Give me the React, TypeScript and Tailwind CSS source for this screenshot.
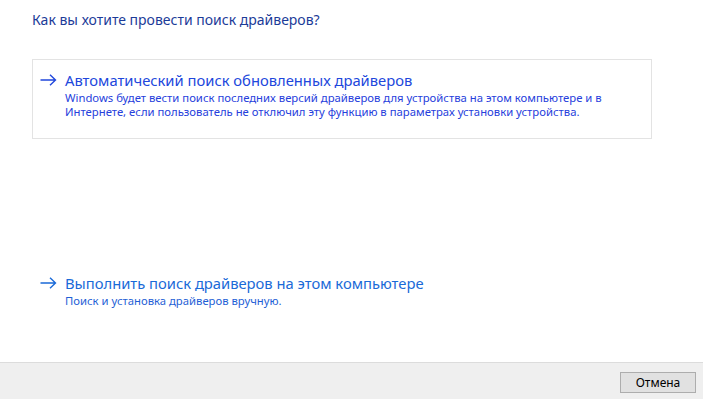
import React from 'react';

const Arrow = () => (
  <svg width="17" height="12" viewBox="0 0 17 12" className="shrink-0">
    <path d="M0.5 6 H15.5 M10 0.8 L15.5 6 L10 11.2" fill="none" stroke="currentColor" strokeWidth="1.4" />
  </svg>
);

const App = () => {
  return (
    <div className="w-[703px] h-[399px] bg-white flex flex-col overflow-hidden" style={{ fontFamily: '"Noto Sans", "Open Sans", sans-serif' }}>
      <div className="flex-1 px-[32px]">
        {/* Main instruction */}
        <h1 className="pt-[10px] text-[14px] leading-[20px] text-[#1c3b98]">Как вы хотите провести поиск драйверов?</h1>

        {/* Option 1 */}
        <div className="mt-[29px] w-[620px] h-[80px] border border-[#e3e3e3] pl-[7px] pt-[10px]">
          <div className="flex items-center gap-[8px] text-[#2147dc]">
            <Arrow />
            <span className="text-[14.75px] leading-[20px]">Автоматический поиск обновленных драйверов</span>
          </div>
          <p className="ml-[25px] mt-[1px] text-[11.3px] leading-[14px] text-[#2640dc]">
            Windows будет вести поиск последних версий драйверов для устройства на этом компьютере и в
            <br />
            Интернете, если пользователь не отключил эту функцию в параметрах установки устройства.
          </p>
        </div>

        {/* Option 2 */}
        <div className="mt-[134px] pl-[8px]">
          <div className="flex items-center gap-[8px] text-[#1a6ad8]">
            <Arrow />
            <span className="text-[14.75px] leading-[20px]">Выполнить поиск драйверов на этом компьютере</span>
          </div>
          <p className="ml-[25px] mt-[1px] text-[11.3px] leading-[14px] text-[#1f5fd6]">Поиск и установка драйверов вручную.</p>
        </div>
      </div>

      {/* Footer */}
      <div className="h-[37px] shrink-0 border-t border-[#dcdcdc] bg-[#efefef] flex justify-end items-start pt-[9px] pr-[7px]">
        <button className="w-[76px] h-[21px] border border-[#adadad] bg-[#e1e1e1] text-[12px] leading-[18px] text-black">Отмена</button>
      </div>
    </div>
  );
};

export default App;
